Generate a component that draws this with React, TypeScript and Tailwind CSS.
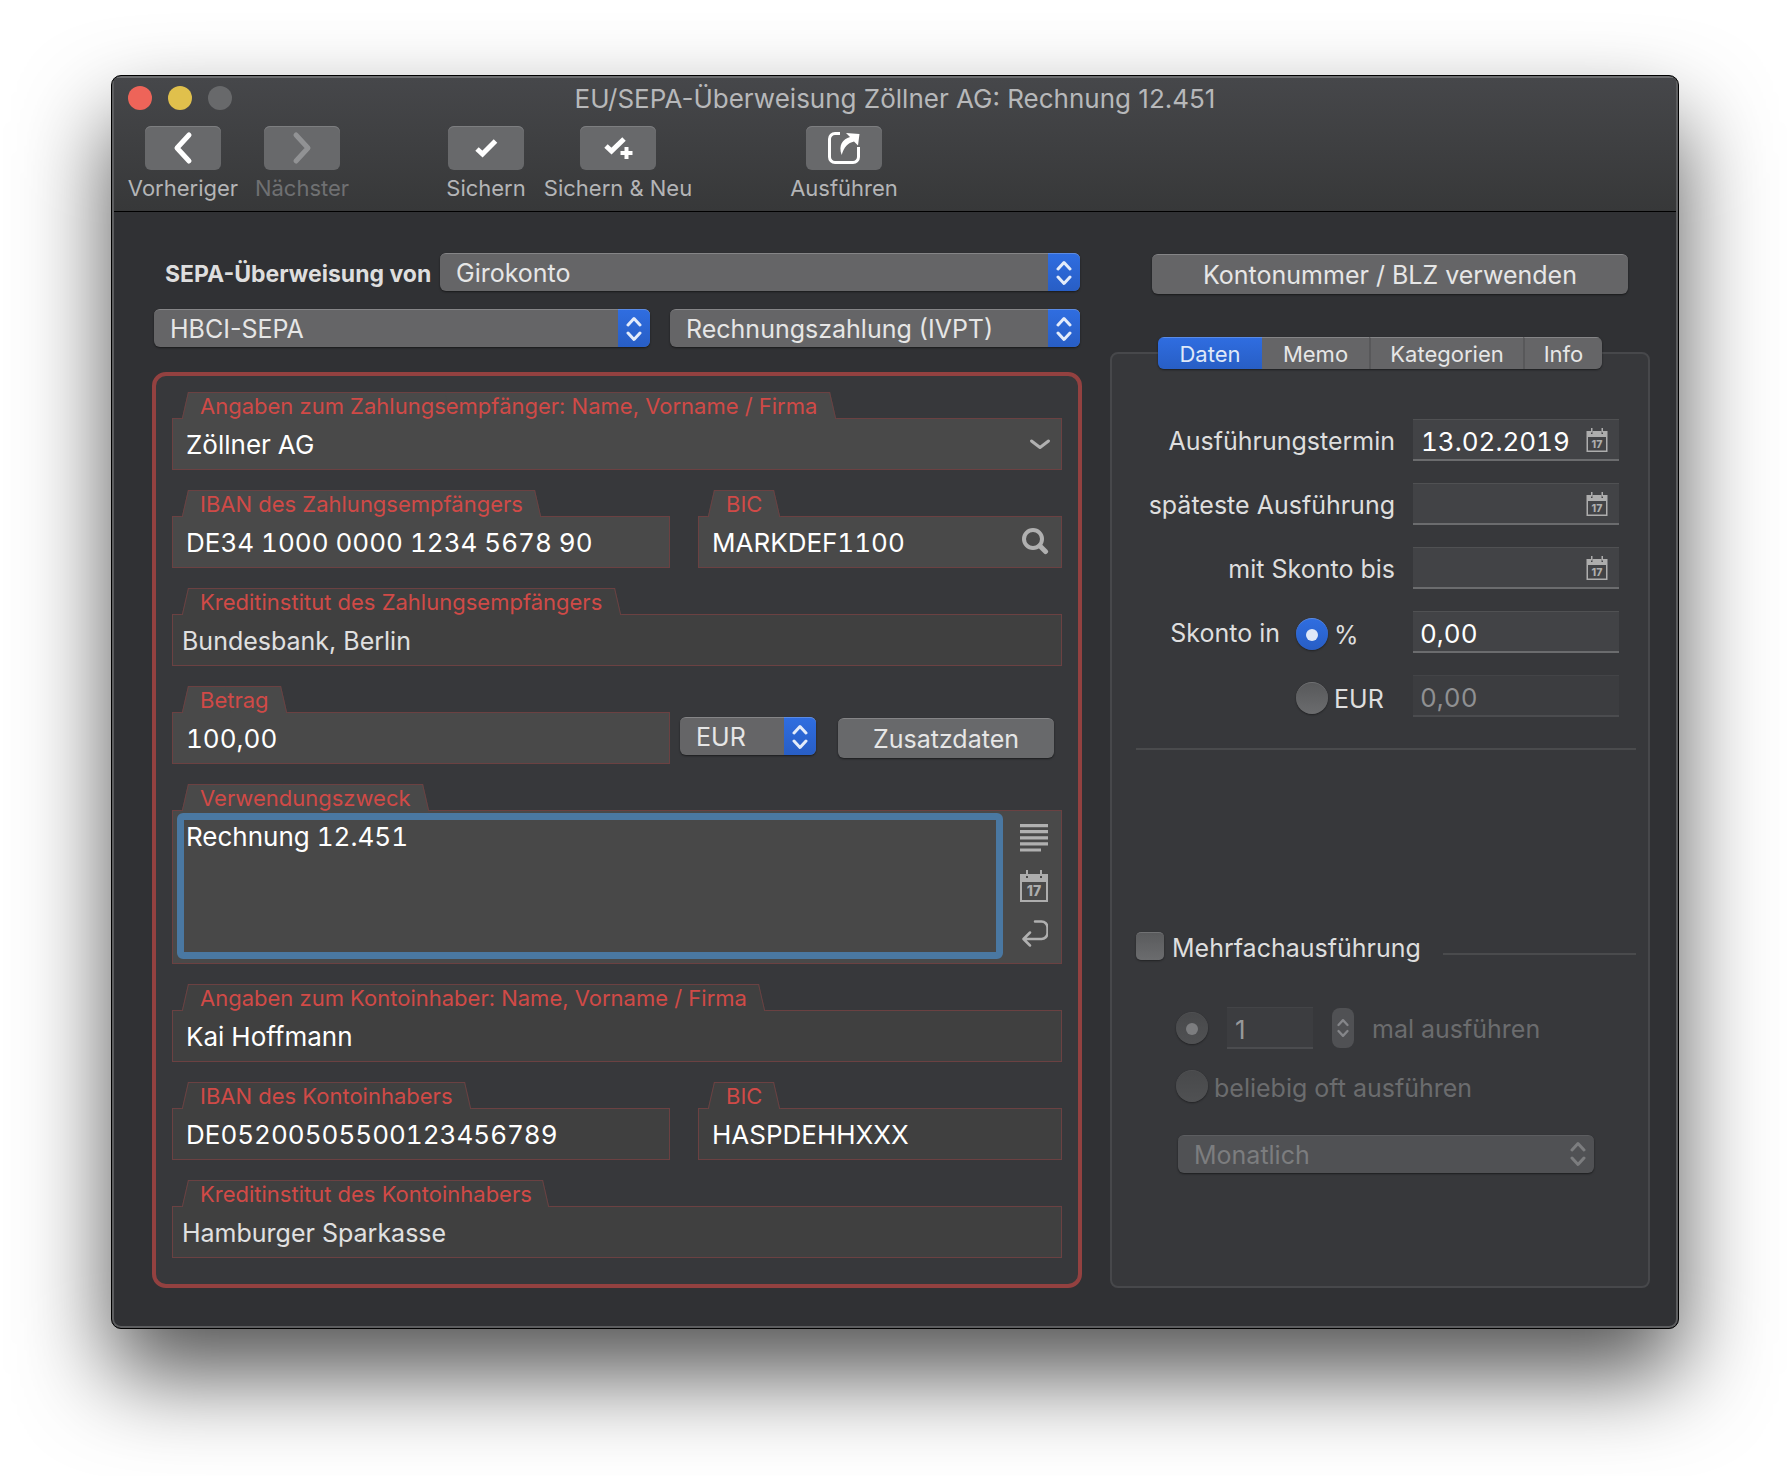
import type { ReactNode } from "react";

function Arrows({ className }: { className: string }) {
  return (
    <svg viewBox="0 0 16 26" className={className} fill="none" stroke="currentColor" strokeWidth="3" strokeLinecap="round" strokeLinejoin="round">
      <path d="M2 9 8 2.500 14 9M2 17 8 23.500 14 17" />
    </svg>
  );
}

function CalendarIcon({ className }: { className: string }) {
  return (
    <svg viewBox="0 0 28 32" className={className} aria-hidden="true">
      <path fill="#adadad" fillRule="evenodd" d="M0 4h6v4h2V4h12v4h2V4h6v28H0zM2 12v18h24V12z" />
      <path stroke="#adadad" strokeWidth="2" d="M7 0v6M21 0v6" />
      <text x="14" y="26" textAnchor="middle" fontSize="14" fontWeight="800" fill="#adadad">17</text>
    </svg>
  );
}

function ToolbarItem({ label, width, disabled, children }: { label: string; width: string; disabled?: boolean; children: ReactNode }) {
  return (
    <button type="button" disabled={disabled} className={`flex shrink-0 flex-col items-center gap-1.5 ${width}`}>
      <span className="flex h-11 w-[76px] items-center justify-center rounded-md bg-[#68696b] shadow-[inset_0_1px_0_#7d7e80]">
        <svg viewBox="-18 -18 36 36" className={`size-9 ${disabled ? "text-[#919294]" : "text-white"}`} fill="none" stroke="currentColor">
          {children}
        </svg>
      </span>
      <span className={`text-[22px] leading-6 whitespace-nowrap ${disabled ? "text-[#6f7072]" : "text-[#b4b5b7]"}`}>{label}</span>
    </button>
  );
}

function Select({ label, value, className, disabled }: { label: string; value: string; className: string; disabled?: boolean }) {
  return (
    <div className={`relative h-[38px] ${className}`}>
      <select
        aria-label={label}
        disabled={disabled}
        className={`size-full appearance-none rounded-md border-t pr-9 pl-4 text-[25px] leading-8 shadow-[0_1px_2px_rgba(0,0,0,0.5)] outline-none ${
          disabled ? "border-[#5c5d60] bg-[#505154] text-[#7c7d7f]" : "border-[#858587] bg-[#656567] text-[#e6e6e6]"
        }`}
      >
        <option>{value}</option>
      </select>
      <span
        className={`pointer-events-none absolute inset-y-0 right-0 flex w-8 items-center justify-center rounded-r-md ${
          disabled ? "text-[#7c7d7f]" : "border-t border-[#5a8be6] bg-linear-to-b from-[#2f6de0] to-[#285ec5] text-[#e4ecfa]"
        }`}
      >
        <Arrows className="h-[26px] w-4" />
      </span>
    </div>
  );
}

type FieldProps = {
  id: string;
  label: string;
  value?: string;
  dim?: boolean;
  readOnly?: boolean;
  className?: string;
  icon?: ReactNode;
  children?: ReactNode;
};

// Box with a slanted tab on top that carries the label
function Field({ id, label, value, dim, readOnly, className = "", icon, children }: FieldProps) {
  const fill = dim
    ? "before:bg-[#404040] after:bg-[#404040]"
    : "before:bg-[#494949] after:bg-[#494949]";
  return (
    <div className={`flex min-w-0 flex-col items-start ${className}`}>
      <label
        htmlFor={id}
        className={`relative z-10 -mb-px ml-4 flex h-[27px] items-center px-3 text-[22px] leading-6 whitespace-nowrap text-[#d04a47] before:absolute before:inset-y-0 before:left-0 before:-z-10 before:w-3/5 before:origin-top before:-skew-x-[13deg] before:border-t before:border-l before:border-[#6b4142] after:absolute after:inset-y-0 after:right-0 after:-z-10 after:w-3/5 after:origin-top after:skew-x-[13deg] after:border-t after:border-r after:border-[#6b4142] ${fill}`}
      >
        {label}
      </label>
      {children ?? (
        <div className={`flex h-[52px] w-full items-center border border-[#6b4142] ${dim ? "bg-[#404040]" : "bg-[#494949]"}`}>
          <input
            id={id}
            defaultValue={value}
            readOnly={readOnly}
            className={`h-full min-w-0 flex-1 bg-transparent outline-none ${
              readOnly ? "pt-0.5 pl-[9px] text-[25px] text-[#e0e0e0]" : "pl-[13px] text-[26px] text-white tabular-nums"
            }`}
          />
          {icon}
        </div>
      )}
    </div>
  );
}

const INPUT_BOX = "flex h-[42px] items-center border-t border-b-2 bg-[#424346]";

function DateRow({ id, label, value }: { id: string; label: string; value: string }) {
  return (
    <div className="flex items-center justify-end gap-[18px]">
      <label htmlFor={id} className="pt-0.5 text-[25px] leading-8 whitespace-nowrap text-[#dedede]">{label}</label>
      <div className={`${INPUT_BOX} w-[206px] border-t-[#505153] border-b-[#6b6c6e] pr-2.5`}>
        <input id={id} defaultValue={value} className="h-full min-w-0 flex-1 bg-transparent pt-1 pl-2 text-[26px] text-white tabular-nums outline-none" />
        <button type="button" aria-label={`${label} wählen`}>
          <CalendarIcon className="h-6 w-6" />
        </button>
      </div>
    </div>
  );
}

const RADIO =
  "grid size-8 shrink-0 appearance-none place-content-center rounded-full border-t border-[#717274] bg-linear-to-b from-[#58595b] to-[#6b6c6e] shadow-[0_1px_2px_rgba(0,0,0,0.4)] before:size-3 before:rounded-full checked:border-[#5a8be6] checked:from-[#2f6de0] checked:to-[#285ec5] checked:before:bg-[#dfe8f8] disabled:border-[#505153] disabled:from-[#48494b] disabled:to-[#505153] disabled:checked:before:bg-[#7c7d7f]";

const TABS = [
  { label: "Daten", width: "w-[104px]" },
  { label: "Memo", width: "w-[107px]" },
  { label: "Kategorien", width: "w-[154px]" },
  { label: "Info", width: "w-[79px]" },
];

function TransferForm() {
  return (
    <div className="min-w-0">
      <div className="flex flex-col gap-[18px] px-0.5">
        <div className="flex items-center">
          <span className="w-[286px] shrink-0 pt-1 pl-[11px] text-[23px] leading-8 font-bold whitespace-nowrap text-[#dedede]">SEPA-Überweisung von</span>
          <Select label="SEPA-Überweisung von" value="Girokonto" className="flex-1" />
        </div>
        <div className="grid grid-cols-[496fr_410fr] gap-5">
          <Select label="Verfahren" value="HBCI-SEPA" className="w-full" />
          <Select label="Zahlungsart" value="Rechnungszahlung (IVPT)" className="w-full" />
        </div>
      </div>

      <div className="mt-[25px] flex flex-col gap-5 rounded-[14px] border-4 border-[#934140] bg-[#37383b] px-4 pt-4 pb-[26px]">
        <Field
          id="payee"
          label="Angaben zum Zahlungsempfänger: Name, Vorname / Firma"
          value="Zöllner AG"
          icon={
            <button type="button" aria-label="Empfänger auswählen" className="mr-2.5">
              <svg viewBox="0 0 22 12" className="h-3 w-[22px]" fill="none" stroke="#b0b0b0" strokeWidth="3" strokeLinecap="round" strokeLinejoin="round">
                <path d="M2.500 3 11 9.500 19.500 3" />
              </svg>
            </button>
          }
        />
        <div className="grid grid-cols-[minmax(0,498fr)_minmax(0,364fr)] gap-7">
          <Field id="payee-iban" label="IBAN des Zahlungsempfängers" value="DE34 1000 0000 1234 5678 90" />
          <Field
            id="payee-bic"
            label="BIC"
            value="MARKDEF1100"
            icon={
              <button type="button" aria-label="BIC suchen" className="mr-3">
                <svg viewBox="0 0 28 28" className="size-7" fill="none" stroke="#b0b0b0" strokeLinecap="round">
                  <circle cx="12" cy="11" r="9" strokeWidth="4" />
                  <path d="M19 18 24.500 23.500" strokeWidth="5" />
                </svg>
              </button>
            }
          />
        </div>
        <Field id="payee-bank" label="Kreditinstitut des Zahlungsempfängers" value="Bundesbank, Berlin" dim readOnly />
        <div className="flex items-end">
          <Field id="amount" label="Betrag" value="100,00" className="w-[498px]" />
          <div className="flex flex-1 items-start gap-[22px] pb-1.5 pl-2.5">
            <Select label="Währung" value="EUR" className="w-[136px]" />
            <button type="button" className="mt-px h-10 w-[216px] rounded-md border-t border-[#858587] bg-[#68696b] text-[25px] leading-8 text-[#e6e6e6] shadow-[0_1px_2px_rgba(0,0,0,0.5)]">
              Zusatzdaten
            </button>
          </div>
        </div>
        <Field id="purpose" label="Verwendungszweck">
          <div className="flex w-full border border-[#6b4142] bg-[#494949] pt-0.5 pb-1 pl-1">
            <textarea
              id="purpose"
              defaultValue="Rechnung 12.451"
              className="h-[146px] min-w-0 flex-1 resize-none rounded-md border-[7px] border-[#4a78a2] bg-[#484848] px-0.5 pt-px text-[26px] leading-8 text-white tabular-nums outline-none"
            />
            <div className="flex w-[58px] flex-col items-center pt-[11px] pl-1">
              <button type="button" aria-label="Textbausteine">
                <svg viewBox="0 0 28 28" className="size-7" stroke="#b0b0b0" strokeWidth="3.200">
                  <path d="M0 1.600h28M0 7.700h28M0 13.800h28M0 19.900h28M0 26h21" />
                </svg>
              </button>
              <button type="button" aria-label="Datum einfügen" className="mt-[18px]">
                <CalendarIcon className="h-8 w-7" />
              </button>
              <button type="button" aria-label="Zeilenumbruch" className="mt-[17px]">
                <svg viewBox="0 0 28 28" className="size-7" fill="none" stroke="#b0b0b0" strokeWidth="2.500" strokeLinecap="round" strokeLinejoin="round">
                  <path d="M15 2.500h6.500a6 6 0 0 1 6 6v5.500a6 6 0 0 1-6 6H4M10 13.500 3.500 20 10 26.500" />
                </svg>
              </button>
            </div>
          </div>
        </Field>
        <Field id="owner" label="Angaben zum Kontoinhaber: Name, Vorname / Firma" value="Kai Hoffmann" dim />
        <div className="grid grid-cols-[minmax(0,498fr)_minmax(0,364fr)] gap-7">
          <Field id="owner-iban" label="IBAN des Kontoinhabers" value="DE05200505500123456789" dim />
          <Field id="owner-bic" label="BIC" value="HASPDEHHXXX" dim />
        </div>
        <Field id="owner-bank" label="Kreditinstitut des Kontoinhabers" value="Hamburger Sparkasse" dim readOnly />
      </div>
    </div>
  );
}

function DetailsPanel() {
  return (
    <div className="flex min-w-0 flex-col">
      <button type="button" className="mt-px mr-[22px] ml-[42px] h-10 rounded-md border-t border-[#858587] bg-[#656567] text-[25px] leading-8 text-[#e6e6e6] shadow-[0_1px_2px_rgba(0,0,0,0.5)]">
        Kontonummer / BLZ verwenden
      </button>

      <div className="mt-[58px] flex-1 rounded-lg border-2 border-[#47484b] bg-[#37383b]">
        <div role="tablist" className="-mt-[17px] mr-[46px] ml-auto flex h-8 w-fit overflow-hidden rounded-md shadow-[0_1px_2px_rgba(0,0,0,0.5)]">
          {TABS.map((tab, i) => (
            <button
              key={tab.label}
              type="button"
              role="tab"
              aria-selected={i === 0}
              className={`border-t text-[22px] leading-7 ${tab.width} ${
                i === 0
                  ? "border-[#5a8be6] bg-linear-to-b from-[#2f6de0] to-[#285ec5] text-[#dfe8f8]"
                  : "border-t-[#858587] bg-[#656567] text-[#e6e6e6]"
              } ${i > 1 ? "border-l-2 border-l-[#58585a]" : ""}`}
            >
              {tab.label}
            </button>
          ))}
        </div>

        <div className="mt-[50px] flex flex-col gap-[22px] pr-[29px]">
          <DateRow id="due" label="Ausführungstermin" value="13.02.2019" />
          <DateRow id="latest" label="späteste Ausführung" value="" />
          <DateRow id="discount-until" label="mit Skonto bis" value="" />
          <div className="flex items-center justify-end text-[25px] leading-8 text-[#dedede]">
            <span className="mr-4 pt-0.5">Skonto in</span>
            <label className="flex h-9 w-[117px] items-center gap-1.5 pt-1">
              <input type="radio" name="discount" defaultChecked className={RADIO} />
              <span className="pt-0.5">%</span>
            </label>
            <input aria-label="Skonto in %" defaultValue="0,00" className={`${INPUT_BOX} w-[206px] border-t-[#505153] border-b-[#6b6c6e] pt-1 pl-[7px] text-[26px] text-white tabular-nums outline-none`} />
          </div>
          <div className="flex items-center justify-end text-[25px] leading-8 text-[#dedede]">
            <label className="flex h-9 w-[117px] items-center gap-1.5 pt-1">
              <input type="radio" name="discount" className={RADIO} />
              <span className="pt-0.5">EUR</span>
            </label>
            <input aria-label="Skonto in EUR" disabled defaultValue="0,00" className="h-[42px] w-[206px] border-t border-b-2 border-t-[#434447] border-b-[#4b4c4f] bg-[#3c3d40] pt-1 pl-[7px] text-[26px] text-[#8f9092] tabular-nums" />
          </div>
        </div>

        <hr className="mt-[31px] mr-3 ml-6 border-t-2 border-[#4a4b4d]" />

        <div className="mt-[180px] mr-3 ml-6 flex h-8 items-center gap-[22px]">
          <label className="flex h-8 items-center gap-2 text-[25px] leading-8 text-[#dedede]">
            <input type="checkbox" className="size-7 shrink-0 appearance-none rounded-[5px] border-t border-[#717274] bg-linear-to-b from-[#5a5b5d] to-[#6b6c6e] shadow-[0_1px_2px_rgba(0,0,0,0.4)]" />
            <span className="pt-1">Mehrfachausführung</span>
          </label>
          <span className="mt-4 h-0.5 flex-1 bg-[#4a4b4d]" />
        </div>

        <div className="mt-[45px] ml-16 flex items-center text-[25px] leading-8 text-[#6b6c6e]">
          <input type="radio" name="repeat" aria-label="mal ausführen" defaultChecked disabled className={RADIO} />
          <input aria-label="Anzahl" defaultValue="1" disabled className="ml-[19px] h-[42px] w-[86px] border-t border-b-2 border-t-[#434447] border-b-[#4b4c4f] bg-[#3c3d40] pt-1 pl-2 text-[26px] text-[#97989a]" />
          <button type="button" disabled aria-label="Anzahl ändern" className="ml-[19px] flex h-10 w-[22px] items-center justify-center rounded-lg bg-[#505154] text-[#85868a]">
            <Arrows className="h-6 w-3" />
          </button>
          <span className="ml-[18px] pt-0.5">mal ausführen</span>
        </div>
        <label className="mt-[21px] ml-16 flex h-8 items-center gap-1.5 text-[25px] leading-8 text-[#6b6c6e]">
          <input type="radio" name="repeat" disabled className={RADIO} />
          <span className="pt-1">beliebig oft ausführen</span>
        </label>
        <Select label="Intervall" value="Monatlich" disabled className="mt-[33px] mr-[54px] ml-[66px]" />
      </div>
    </div>
  );
}

export default function App() {
  return (
    <div className="min-h-screen overflow-hidden bg-white px-[111px] pt-[75px] pb-[147px] font-['Inter',sans-serif]">
      <main className="overflow-hidden rounded-[10px] border border-black bg-[#303134] shadow-[0_46px_90px_rgba(0,0,0,0.67)]">
        <div className="rounded-[9px] border-2 border-[#5d5e60] border-t-[#6d6e70]">
          <header className="border-b border-black bg-linear-to-b from-[#46474a] to-[#373839]">
            <div className="grid h-10 grid-cols-[1fr_auto_1fr] items-center px-3.5">
              <div className="flex gap-4">
                <button type="button" aria-label="Schließen" className="size-6 rounded-full bg-[#ee6459]" />
                <button type="button" aria-label="Minimieren" className="size-6 rounded-full bg-[#e0c04c]" />
                <button type="button" aria-label="Vergrößern" disabled className="size-6 rounded-full bg-[#68696b]" />
              </div>
              <h1 className="pt-0.5 text-[26px] leading-8 text-[#b7b8ba]">EU/SEPA-Überweisung Zöllner AG: Rechnung 12.451</h1>
            </div>
            <div className="flex gap-[18px] pt-2 pb-[11px] pl-[15px]">
              <ToolbarItem label="Vorheriger" width="w-[108px]">
                <path d="M6-13-6 0 6 13" strokeWidth="5" strokeLinecap="round" strokeLinejoin="round" />
              </ToolbarItem>
              <ToolbarItem label="Nächster" width="mr-20 w-[94px]" disabled>
                <path d="M-6-13 6 0-6 13" strokeWidth="5" strokeLinecap="round" strokeLinejoin="round" />
              </ToolbarItem>
              <ToolbarItem label="Sichern" width="w-[78px]">
                <path d="M-9 1-3.500 6 9.500-7" strokeWidth="5" />
              </ToolbarItem>
              <ToolbarItem label="Sichern & Neu" width="mr-20 w-[150px]">
                <path d="M-12-2-6.500 3 6-9" strokeWidth="5" />
                <path d="M8.500-1v12M2.500 5h12" strokeWidth="4" />
              </ToolbarItem>
              <ToolbarItem label="Ausführen" width="w-[106px]">
                <path d="M-4-14.500h-5a5.500 5.500 0 0 0-5.500 5.500V9a5.500 5.500 0 0 0 5.500 5.500H9A5.500 5.500 0 0 0 14.500 9V-1" strokeWidth="3" />
                <path d="M-2.300 7C-6-3-1-9 6-11L2-15 15.500-14 14-2.500 10-6.500C4-5 0-1-2.300 7Z" fill="currentColor" stroke="none" />
              </ToolbarItem>
            </div>
          </header>
          <div className="grid grid-cols-[minmax(0,930fr)_minmax(0,540fr)] gap-7 pt-[41px] pr-[26px] pb-[38px] pl-[38px]">
            <TransferForm />
            <DetailsPanel />
          </div>
        </div>
      </main>
    </div>
  );
}
